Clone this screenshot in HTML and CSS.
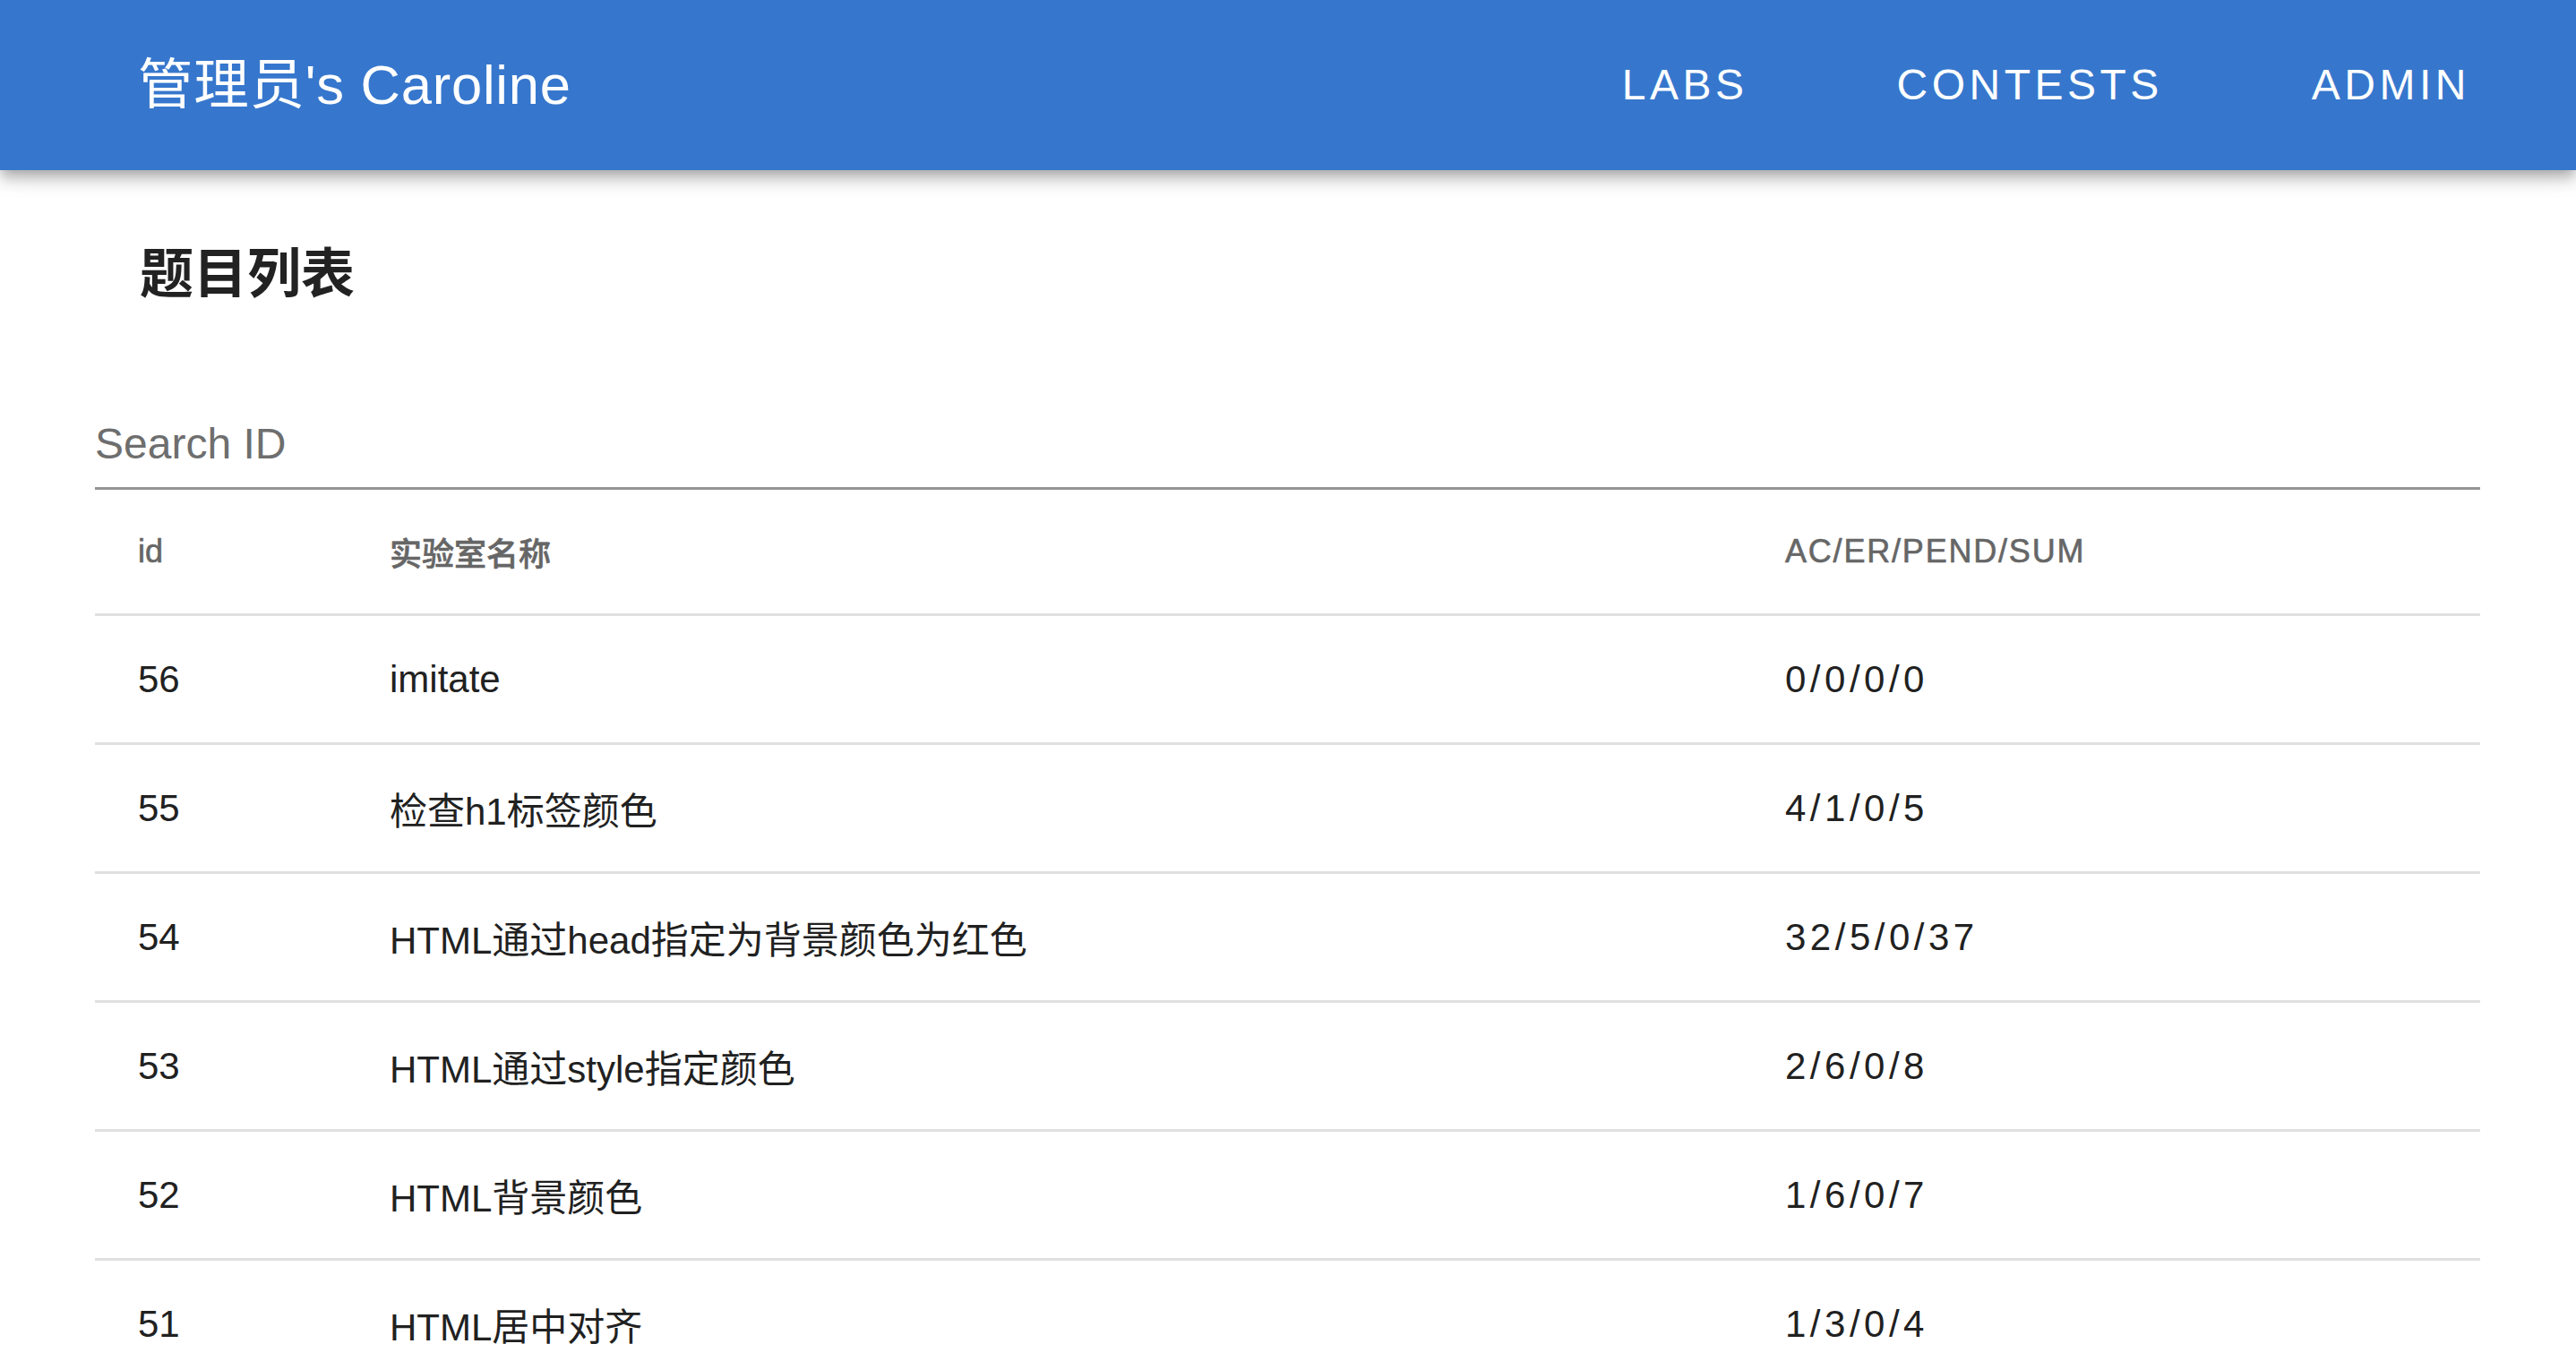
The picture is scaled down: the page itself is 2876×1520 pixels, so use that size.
FILE: index.html
```html
<!DOCTYPE html>
<html lang="zh-CN">
<head>
<meta charset="utf-8">
<title>题目列表</title>
<link rel="stylesheet" href="styles.css">
</head>
<body>
<header class="topbar">
  <div class="brand">管理员's Caroline</div>
  <nav class="nav">
    <a class="nav-link" href="#">LABS</a>
    <a class="nav-link" href="#">CONTESTS</a>
    <a class="nav-link" href="#">ADMIN</a>
  </nav>
</header>
<main class="page">
  <h1 class="heading">题目列表</h1>
  <div class="search">
    <input class="search-input" type="text" placeholder="Search ID">
  </div>
  <div class="table">
    <div class="row head">
      <div class="cell">id</div>
      <div class="cell">实验室名称</div>
      <div class="cell stats">AC/ER/PEND/SUM</div>
    </div>
    <div class="row">
      <div class="cell">56</div>
      <div class="cell">imitate</div>
      <div class="cell stats">0/0/0/0</div>
    </div>
    <div class="row">
      <div class="cell">55</div>
      <div class="cell">检查h1标签颜色</div>
      <div class="cell stats">4/1/0/5</div>
    </div>
    <div class="row">
      <div class="cell">54</div>
      <div class="cell">HTML通过head指定为背景颜色为红色</div>
      <div class="cell stats">32/5/0/37</div>
    </div>
    <div class="row">
      <div class="cell">53</div>
      <div class="cell">HTML通过style指定颜色</div>
      <div class="cell stats">2/6/0/8</div>
    </div>
    <div class="row">
      <div class="cell">52</div>
      <div class="cell">HTML背景颜色</div>
      <div class="cell stats">1/6/0/7</div>
    </div>
    <div class="row">
      <div class="cell">51</div>
      <div class="cell">HTML居中对齐</div>
      <div class="cell stats">1/3/0/4</div>
    </div>
  </div>
</main>
</body>
</html>
```
FILE: styles.css
```css
html, body {
  margin: 0;
  padding: 0;
  background: #ffffff;
  font-family: "Liberation Sans", "Noto Sans CJK SC", sans-serif;
  color: #212121;
  overflow: hidden;
}

.topbar {
  height: 190px;
  background: #3677cd;
  display: flex;
  align-items: center;
  justify-content: space-between;
  padding: 0 118px 0 154px;
  box-sizing: border-box;
  position: relative;
  z-index: 2;
  box-shadow: 0 6px 12px -3px rgba(0, 0, 0, 0.2),
              0 12px 15px 0 rgba(0, 0, 0, 0.14),
              0 3px 30px 0 rgba(0, 0, 0, 0.12);
}

.brand {
  color: #ffffff;
  font-size: 61.5px;
  letter-spacing: 0.75px;
  line-height: 1;
  white-space: nowrap;
}

.nav {
  display: flex;
  align-items: center;
  gap: 166px;
}

.nav-link {
  color: #ffffff;
  text-decoration: none;
  font-size: 48px;
  letter-spacing: 4.5px;
  line-height: 1;
}

.page {
  padding: 0 107px 0 106px;
}

.heading {
  margin: 0;
  padding: 77px 0 0 50px;
  font-size: 60px;
  line-height: 80px;
  font-weight: 700;
  color: #222222;
}

.search {
  margin-top: 118px;
  border-bottom: 3px solid #949494;
  padding-bottom: 19px;
}

.search-input {
  display: block;
  width: 100%;
  box-sizing: border-box;
  border: 0;
  outline: none;
  padding: 0;
  margin: 0;
  height: 60px;
  font-family: "Liberation Sans", "Noto Sans CJK SC", sans-serif;
  font-size: 48px;
  color: #212121;
  background: transparent;
}

.search-input::placeholder {
  color: #6e6e6e;
}

.row {
  display: grid;
  grid-template-columns: 281px 1558px 1fr;
  align-items: center;
  height: 144px;
  box-sizing: border-box;
  border-bottom: 3px solid #e0e0e0;
  font-size: 42px;
  color: #212121;
}

.row.head {
  height: 141px;
  font-size: 36px;
  font-weight: 500;
  color: #666666;
  -webkit-text-stroke: 0.6px #666666;
}

.cell {
  padding-left: 48px;
  white-space: nowrap;
}

.stats {
  letter-spacing: 4.5px;
}

.row.head .stats {
  letter-spacing: 1.8px;
}
```
